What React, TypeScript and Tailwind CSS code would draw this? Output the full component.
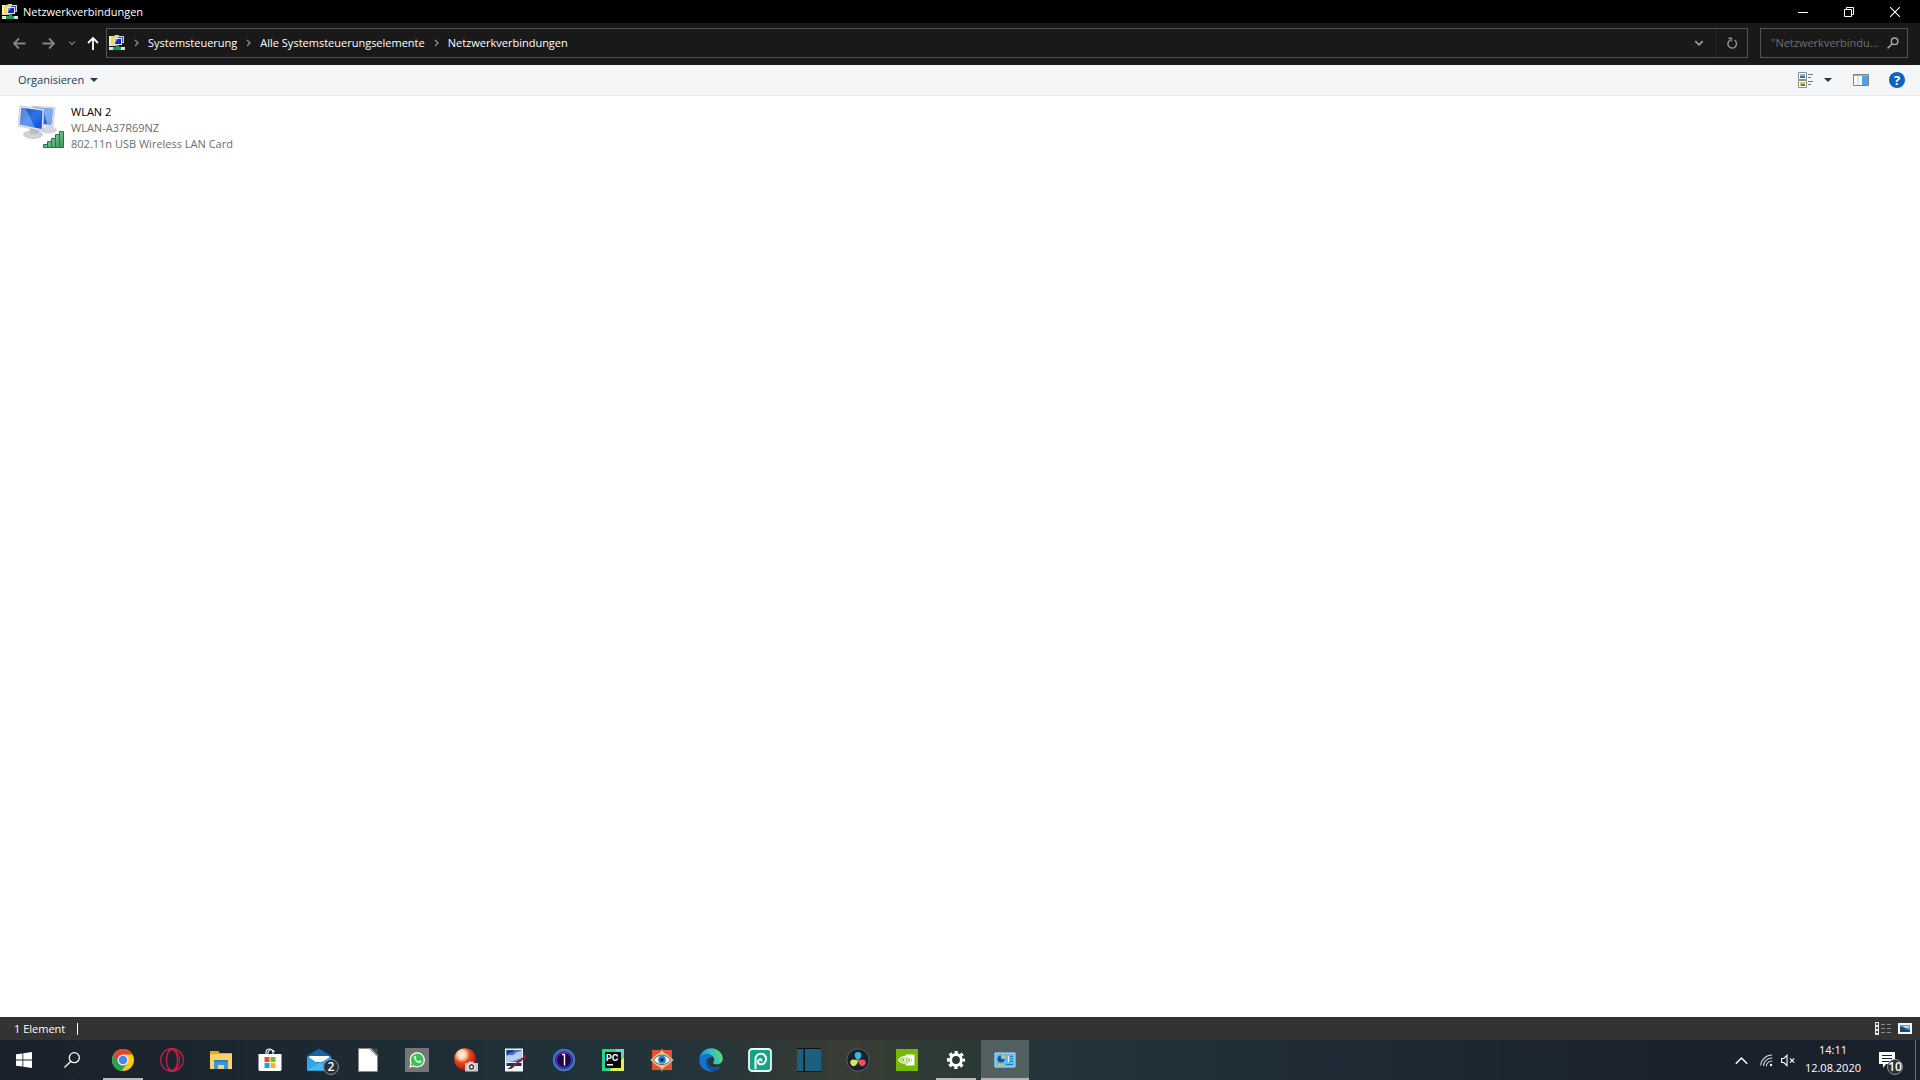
import type { ReactNode } from "react";

const CRUMBS = ["Systemsteuerung", "Alle Systemsteuerungselemente", "Netzwerkverbindungen"];

function NetworkFolderIcon() {
  return (
    <svg width="16" height="16" viewBox="0 0 16 16" className="shrink-0">
      <path d="M0 1h5l1-1h4v11H0z" fill="#f0d66e" />
      <path d="M0 1h2v10H0z" fill="#fbf0b4" />
      <path d="M8 1h7v7H8z" fill="#c9d2ea" />
      <path d="M9 2h5v5H9z" fill="#3550cc" />
      <path d="M5 3h8v7H5z" fill="#dfe5f4" />
      <path d="M6 4h6v5H6z" fill="#1526b8" />
      <path d="M6 4h3L6 8z" fill="#7f9cf2" />
      <path d="M7 10h3v2H7z" fill="#15a05c" />
      <path d="M0 12h16v3H0z" fill="#d8e8de" />
      <path d="M4 12h8v3H4z" fill="#12a45e" />
    </svg>
  );
}

function Chevron({ dir, size = 8, color = "#8a8a8a" }: { dir: "right" | "down" | "up"; size?: number; color?: string }) {
  const d = { right: "M3 1l3 3-3 3", down: "M1 2.5l3 3 3-3", up: "M.5 6L4 2.5 7.5 6" }[dir];
  return (
    <svg width={size} height={size} viewBox="0 0 8 8" fill="none" stroke={color} strokeWidth={dir === "up" ? 0.9 : 1.4} className="shrink-0">
      <path d={d} />
    </svg>
  );
}

function Arrow({ dir, color }: { dir: "left" | "right" | "up"; color: string }) {
  const d = {
    left: "M13.5 7.5H2M7 2.5l-5 5 5 5",
    right: "M.5 7.5H12M7 2.5l5 5-5 5",
    up: "M7 14V2M2 7l5-5 5 5",
  }[dir];
  return (
    <svg width="14" height="15" viewBox="0 0 14 15" fill="none" stroke={color} strokeWidth="1.8">
      <path d={d} />
    </svg>
  );
}

function Triangle() {
  return (
    <svg width="8" height="4" viewBox="0 0 8 4">
      <path d="M0 0h8L4 4z" fill="#1e395b" />
    </svg>
  );
}

function TitleBar() {
  return (
    <header className="flex h-[23px] shrink-0 items-center bg-black pl-0.5 pr-0.5 text-white">
      <NetworkFolderIcon />
      <h1 className="ml-[5px] flex-1">Netzwerkverbindungen</h1>
      <button aria-label="Minimieren" className="flex h-full w-[46px] items-center justify-center">
        <svg width="10" height="10" viewBox="0 0 10 10"><path d="M0 5h10v1H0z" fill="#fff" /></svg>
      </button>
      <button aria-label="Wiederherstellen" className="flex h-full w-[46px] items-center justify-center">
        <svg width="10" height="10" viewBox="0 0 10 10" fill="none" stroke="#fff">
          <path d="M.5 2.5h7v7h-7zM2.5 2.5v-2h7v7h-2" />
        </svg>
      </button>
      <button aria-label="Schließen" className="flex h-full w-[46px] items-center justify-center">
        <svg width="10" height="10" viewBox="0 0 10 10" stroke="#fff" strokeWidth="1.1"><path d="M0 0l10 10M10 0L0 10" /></svg>
      </button>
    </header>
  );
}

function AddressRow() {
  return (
    <div className="flex h-[42px] shrink-0 items-center bg-[#191919] px-3 pb-0.5">
      <button aria-label="Zurück"><Arrow dir="left" color="#858585" /></button>
      <button aria-label="Vorwärts" className="ml-4"><Arrow dir="right" color="#858585" /></button>
      <button aria-label="Verlauf" className="ml-3"><Chevron dir="down" color="#6f6f6f" /></button>
      <button aria-label="Nach oben" className="ml-2.5"><Arrow dir="up" color="#fff" /></button>

      <nav className="ml-1.5 flex h-[30px] flex-1 items-center border border-[#535353] pl-0.5">
        <NetworkFolderIcon />
        {CRUMBS.map((c) => (
          <div key={c} className="flex items-center">
            <span className="ml-[7px] mr-2"><Chevron dir="right" /></span>
            <a href="#" className="text-white">{c}</a>
          </div>
        ))}
        <button aria-label="Vorherige Orte" className="ml-auto mr-3"><Chevron dir="down" size={10} color="#9a9a9a" /></button>
        <button aria-label="Aktualisieren" className="flex h-full w-[31px] items-center justify-center border-l border-[#222]">
          <svg width="12" height="13" viewBox="0 0 12 13" fill="none" stroke="#8f8f8f" strokeWidth="1.5">
            <path d="M8.6 3.2A4.3 4.3 0 1 1 4 3.1" />
            <path d="M2.4 1.2h3v3.4" />
          </svg>
        </button>
      </nav>

      <label className="ml-3 flex h-[30px] w-[148px] items-center border border-[#535353] pl-2.5 pr-2">
        <input
          aria-label="Suchen"
          placeholder={'"Netzwerkverbindu...'}
          className="min-w-0 flex-1 bg-transparent placeholder:text-[#707070] focus:outline-none"
        />
        <svg width="12" height="12" viewBox="0 0 12 12" fill="none" stroke="#a2a2a2" strokeWidth="1.5">
          <circle cx="7.6" cy="4.2" r="3.3" />
          <path d="M5.2 6.8L.6 11.4" />
        </svg>
      </label>
    </div>
  );
}

function Toolbar() {
  return (
    <div className="flex h-[31px] shrink-0 items-center border-b border-[#e6e7e8] bg-[#f5f6f7] pl-[18px] pr-[15px] text-[#1e395b]">
      <button className="flex items-center gap-1.5">Organisieren <Triangle /></button>
      <button aria-label="Ansicht ändern" className="ml-auto">
        <svg width="16" height="16" viewBox="0 0 16 16">
          <path d="M.5.5h8v7h-8zM.5 8.5h8v7h-8z" fill="#fff" stroke="#8b8f94" />
          <path d="M2 2h5v4H2z" fill="#7fb8e8" />
          <path d="M2 4h5v2H2z" fill="#3c6f9c" />
          <path d="M2 10h5v4H2z" fill="#d6c96a" />
          <path d="M3 12h4v2H3z" fill="#6f7a32" />
          <path d="M10 2.500h5M10 5.500h3M10 9.500h5M10 12.500h3" stroke="#6d7782" />
        </svg>
      </button>
      <button aria-label="Weitere Optionen" className="ml-2.5"><Triangle /></button>
      <button aria-label="Vorschaufenster" className="ml-[21px]">
        <svg width="16" height="12" viewBox="0 0 16 12">
          <path d="M.5.5h15v11H.5z" fill="#fff" stroke="#7d848c" />
          <path d="M1 1h14v1H1z" fill="#a9b0b8" />
          <path d="M9 2h6v9H9z" fill="#4ea3e6" />
          <path d="M5 2v9" stroke="#c6cacf" />
        </svg>
      </button>
      <button aria-label="Hilfe" className="ml-5 flex size-4 items-center justify-center rounded-full bg-[#0b62c4] text-[13px] font-bold text-white">?</button>
    </div>
  );
}

function WlanIcon() {
  return (
    <svg width="48" height="48" viewBox="0 0 48 48" className="shrink-0">
      <defs>
        <linearGradient id="screen" x1="0" y1="0" x2="1" y2="1">
          <stop offset="0" stopColor="#1440bd" />
          <stop offset=".5" stopColor="#2f74ea" />
          <stop offset="1" stopColor="#0c49d8" />
        </linearGradient>
        <linearGradient id="bars" x1="0" y1="0" x2="1" y2="1">
          <stop offset="0" stopColor="#a3d9b0" />
          <stop offset="1" stopColor="#37985a" />
        </linearGradient>
      </defs>
      <ellipse cx="31" cy="26" rx="8" ry="3.500" fill="#d3d6da" />
      <path d="M14 2l23 1.500-2 19-19-2z" fill="#dfe2e6" stroke="#b8bcc2" strokeWidth=".6" />
      <path d="M16 3.500l19 1.300-1.800 16L17 19z" fill="url(#screen)" />
      <path d="M25 4l10 .8-1.800 16-4-.5z" fill="#b4d6fc" opacity=".6" />
      <ellipse cx="15" cy="30.500" rx="9.500" ry="4" fill="#cfd2d6" stroke="#b2b5b9" strokeWidth=".5" />
      <path d="M12 24h8l1 6h-9z" fill="#b9bcc1" />
      <path d="M2 2l24 3-1 22L0 22z" fill="#e6e8eb" stroke="#b3b7bd" strokeWidth=".6" />
      <path d="M3.500 3.800l21 2.700-.9 18.500L1.800 20.600z" fill="url(#screen)" />
      <path d="M3.500 3.800l4 .5L17 23.600 1.800 20.600z" fill="#9cc6fb" opacity=".45" />
      <path d="M25.500 40.500h4v3h-4zM29.500 37.500h4v6h-4zM33.500 34.500h4v9h-4zM37.500 30.500h4v13h-4zM41.500 27.500h4v16h-4z" fill="url(#bars)" stroke="#1f7a3e" />
    </svg>
  );
}

function Content() {
  return (
    <main className="min-h-0 flex-1 bg-white px-[18px] py-1.5">
      <button className="flex w-60 items-start gap-[5px] pt-0.5 text-left">
        <WlanIcon />
        <span className="flex flex-col whitespace-nowrap leading-4 text-[#6d6d6d]">
          <span className="text-black">WLAN 2</span>
          <span>WLAN-A37R69NZ</span>
          <span>802.11n USB Wireless LAN Card</span>
        </span>
      </button>
    </main>
  );
}

function StatusBar() {
  return (
    <div className="flex h-[23px] shrink-0 items-center bg-[#333] pl-3.5 pr-2 text-white">
      <span>1 Element</span>
      <span className="ml-3 h-3 w-px bg-white" />
      <button aria-label="Details" className="ml-auto">
        <svg width="16" height="13" viewBox="0 0 16 13">
          <path d="M0 0h4v13H0z" fill="#e8e8e8" />
          <path d="M1 1h2v2H1zM1 5h2v2H1zM1 9h2v2H1z" fill="#444" />
          <path d="M6 2.500h4M12 2.500h4M6 6.500h4M12 6.500h4M6 10.500h4M12 10.500h4" stroke="#8a8a8a" />
        </svg>
      </button>
      <button aria-label="Große Symbole" className="ml-[7px]">
        <svg width="14" height="11" viewBox="0 0 14 11">
          <path d="M0 0h14v11H0z" fill="#f4f7fa" />
          <path d="M2 2h10v7H2z" fill="#4f9fe0" />
          <path d="M2 4c3-1 6 3 10 3v2H2z" fill="#1d4a68" />
          <path d="M5 3h6v1.500H7z" fill="#d8ecfb" />
        </svg>
      </button>
    </div>
  );
}

const APPS: { name: string; icon: ReactNode; state?: "open" | "active"; badge?: number }[] = [
  {
    name: "Google Chrome",
    state: "open",
    icon: (
      <>
        <circle cx="12" cy="12" r="11" fill="#fbc916" />
        <path d="M12 12L2.500 6.500A11 11 0 0 0 10.500 22.900L16.800 14.700z" fill="#23a455" />
        <path d="M2.500 6.500A11 11 0 0 1 21.500 6.500H12L7.200 14.700z" fill="#e04434" />
        <circle cx="12" cy="12" r="5.500" fill="#f4f4f4" />
        <circle cx="12" cy="12" r="4.300" fill="#4787ee" />
      </>
    ),
  },
  {
    name: "Opera GX",
    icon: (
      <g fill="none" stroke="#d41c4a" strokeWidth="1.200">
        <circle cx="12" cy="12" r="11.300" />
        <ellipse cx="12" cy="12" rx="5.500" ry="10.800" />
        <path d="M8.500 2.500c7-3 11 3 11 9.500s-4 12.500-11 9.500" />
      </g>
    ),
  },
  {
    name: "Explorer",
    icon: (
      <>
        <path d="M1 3h8l2 2h12v16H1z" fill="#e8a52c" />
        <path d="M1 6h22v15H1z" fill="#fdd365" />
        <path d="M5 12h14v9h-4v-4H9v4H5z" fill="#3a95dc" />
        <path d="M5 12h14v2H5z" fill="#2c7fc4" />
      </>
    ),
  },
  {
    name: "Microsoft Store",
    icon: (
      <>
        <path d="M8 8V4.500a3.500 3.500 0 0 1 7 0V8M10 8V4a3.500 3.500 0 0 1 6.500 0" fill="none" stroke="#fff" strokeWidth="1.100" />
        <path d="M.5 6h23v15.500a1.500 1.500 0 0 1-1.500 1.500H2a1.500 1.500 0 0 1-1.500-1.500z" fill="#fff" />
        <path d="M6.500 9h5v5h-5z" fill="#e8501e" />
        <path d="M12.500 9h5v5h-5z" fill="#7fb61b" />
        <path d="M6.500 15h5v5h-5z" fill="#1f9fe8" />
        <path d="M12.500 15h5v5h-5z" fill="#fbb414" />
      </>
    ),
  },
  {
    name: "Mail",
    badge: 2,
    icon: (
      <>
        <path d="M0 8l12-7.500L24 8v14.500H0z" fill="#1563ac" />
        <path d="M2 8h20v6H2z" fill="#fff" />
        <path d="M0 8l12 8 12-8v14.500H0z" fill="#2ea4ea" />
        <path d="M0 22.500L13 14l11 8.500z" fill="#46b8f2" />
      </>
    ),
  },
  {
    name: "LibreOffice",
    icon: (
      <>
        <path d="M2.500.5h13l6 7v16h-19z" fill="#fff" stroke="#8c8c8c" />
        <path d="M13 .5h8.500V9z" fill="#4c4c4c" />
        <path d="M13 .5l8.500 8.500v-2L15 .5z" fill="#a7a7a7" />
      </>
    ),
  },
  {
    name: "WhatsApp",
    icon: (
      <>
        <path d="M0 0h24v24H0z" fill="#757575" />
        <path d="M5 19l1-4a7 7 0 1 1 2.700 2.900z" fill="#3cc157" stroke="#fff" strokeWidth="1.200" />
        <path d="M9.200 8.200c1-.9 1.500-.3 2 1.200.2.700-.8 1-.4 1.600.7 1.200 1.500 1.800 2.500 2.200.6.200 1-1.200 1.600-.9 1.800.8 1.700 1 1.200 1.800-2.500 3-8-2.500-6.900-5.900z" fill="#fff" />
      </>
    ),
  },
  {
    name: "Foto-Werkzeug",
    icon: (
      <>
        <defs>
          <radialGradient id="ball" cx=".35" cy=".3" r=".75">
            <stop offset="0" stopColor="#fff" />
            <stop offset=".28" stopColor="#f7c9a0" />
            <stop offset=".5" stopColor="#e8451a" />
            <stop offset="1" stopColor="#b51208" />
          </radialGradient>
        </defs>
        <circle cx="11" cy="11" r="10.800" fill="url(#ball)" />
        <path d="M11 15h3l1-1.500h4l1 1.500h4v8.500H11z" fill="#c9c9c9" />
        <circle cx="17.500" cy="19" r="3.500" fill="#4a4a4a" stroke="#fff" />
        <circle cx="17.500" cy="19" r="1.200" fill="#fff" />
      </>
    ),
  },
  {
    name: "Paint.NET",
    icon: (
      <>
        <path d="M2 .5h18v23H2z" fill="#f2f5fa" />
        <path d="M3.500 2h15v12h-15z" fill="#4474b8" />
        <path d="M3.500 9c3-4 5 0 8-3s4-2 7-3v7c-5 2-8 4-15 4z" fill="#b6cfee" />
        <path d="M3.500 2h8c-2 3-4 2-8 5z" fill="#163b84" />
        <path d="M3.500 15h15v3h-15z" fill="#1f3558" />
        <path d="M8 20L23.500 7.500" stroke="#8e2030" strokeWidth="1.800" />
        <path d="M4.500 20.500c2 0 3-3 5-2.500 1 2-2 4-5 2.500z" fill="#2c2c34" />
      </>
    ),
  },
  {
    name: "One",
    icon: (
      <>
        <circle cx="12" cy="12" r="10" fill="#0b0820" stroke="#3a78cc" strokeWidth="2.400" />
        <circle cx="12" cy="12" r="7.800" fill="#1c0a4c" stroke="#6a2cc0" strokeWidth="1.400" />
        <path d="M10 6.500h2.500v11" fill="none" stroke="#fff" strokeWidth="1.400" />
      </>
    ),
  },
  {
    name: "PyCharm",
    icon: (
      <>
        <path d="M1 1h22v10L11 23H1z" fill="#21d789" />
        <path d="M14 1h9v6l-4 6z" fill="#5fd8d0" />
        <path d="M23 9v14H8l10-9z" fill="#e6ee4e" />
        <path d="M4 4h16v16H4z" fill="#080808" />
        <text x="5" y="13" fontSize="9" fontWeight="700" fill="#fff" fontFamily="Inter, sans-serif">PC</text>
        <path d="M6 16h6v1.500H6z" fill="#fff" />
      </>
    ),
  },
  {
    name: "Bildbetrachter",
    icon: (
      <>
        <path d="M2 2h20v20H2z" fill="#e8502c" />
        <path d="M12 .5c1 4 3 4.500 6 6l5.500 5.500L18 17.500c-3 1.500-5 2-6 6-1-4-3-4.500-6-6L.5 12 6 6.500c3-1.500 5-2 6-6z" fill="#e8c497" stroke="#99673c" strokeWidth=".6" />
        <path d="M3.500 12c4-6.500 13-6.500 17 0-4 6-13 6-17 0z" fill="#fff" stroke="#64402a" strokeWidth=".9" />
        <circle cx="12" cy="11.800" r="4" fill="#2589dc" />
        <circle cx="12" cy="11.800" r="1.800" fill="#0a1a30" />
      </>
    ),
  },
  {
    name: "Microsoft Edge",
    icon: (
      <>
        <defs>
          <linearGradient id="edge" x1="0" y1=".6" x2="1" y2=".4">
            <stop offset="0" stopColor="#1687d4" />
            <stop offset=".5" stopColor="#2cbcd8" />
            <stop offset="1" stopColor="#5fdc5c" />
          </linearGradient>
        </defs>
        <path d="M.3 11C1 4.500 6 .3 12.200.3 19 .3 23.800 5.500 23.800 10.500c0 3.500-2.600 5.800-6 5.800-2.500 0-3.800-.9-3.800-1.600 0-.5 1.200-1 1.200-3C15.200 9 12.500 6.500 8.700 6.500 4 6.500 1.200 9 .3 11z" fill="url(#edge)" />
        <path d="M.3 11.500C1 8 4.500 6.300 8.500 6.500c3 .2 4.500 1.500 5 2.500-4 0-5 3-4.500 5.500.8 4 5 6.500 10.500 4.500.8-.3 1.500.2 1 .8A11.700 11.700 0 0 1 .3 11.500z" fill="#1673c8" />
        <path d="M9.500 9.800c-3 2-3.500 6-1 9.500 1.500 2.200 3.800 3.700 5.800 4.300 3-.5 5-2 6.300-4-5 2-10.500 0-11.500-4.500-.4-2 0-4 .4-5.300z" fill="#0d4f9f" />
      </>
    ),
  },
  {
    name: "PicsArt",
    icon: (
      <>
        <rect x="1" y="1" width="22" height="22" rx="3" fill="#16a487" stroke="#eef8f5" strokeWidth="1.800" />
        <path d="M7.500 20.500V11a5.300 5.300 0 1 1 5.300 5.300c-2.500 0-3.300-2.300-2.300-4 1-1.600 3-1.200 3 .2" fill="none" stroke="#fff" strokeWidth="2" strokeLinecap="round" />
      </>
    ),
  },
  {
    name: "Notizbuch",
    icon: (
      <>
        <path d="M0 1h24v22H0z" fill="#1b607e" />
        <path d="M0 0h24v1H0zM0 23h24v1H0zM6.500 1H8v22H6.500z" fill="#07141b" />
      </>
    ),
  },
  {
    name: "DaVinci Resolve",
    icon: (
      <>
        <circle cx="12" cy="12" r="11.200" fill="#17212f" stroke="#5b6772" strokeWidth=".9" />
        <path d="M12 12.500c-5-4-4-8.500 0-8.500s5 4.500 0 8.500z" fill="#38b8dc" />
        <path d="M12 12.500c-.8 6-5.200 7.200-7.200 3.800-2-3.500 1.500-6.200 7.200-3.800z" fill="#dde54f" />
        <path d="M12 12.500c5.800-2.400 9.200.5 7.200 3.800-2 3.400-6.400 2.200-7.200-3.800z" fill="#ec5351" />
      </>
    ),
  },
  {
    name: "NVIDIA",
    icon: (
      <>
        <path d="M1 1h22v22H1z" fill="#76b900" />
        <path d="M10.500 6.500h9v11h-9z" fill="#fff" />
        <path d="M3 12c3.500-5.500 10.500-5.500 14 0-3.500 5.500-10.500 5.500-14 0z" fill="#76b900" />
        <g fill="none" stroke="#fff" strokeWidth="1.100">
          <path d="M3.500 12c3-4.500 9.500-4.800 12.500-.5-3 5-9.500 5-12.500.5z" />
          <path d="M6 12c2-3 5.500-3 7.500-.5-2 3.300-5.500 3.300-7.500.5z" />
          <circle cx="10" cy="11.800" r=".7" />
        </g>
      </>
    ),
  },
  {
    name: "Einstellungen",
    state: "open",
    icon: (
      <g stroke="#fff" fill="none">
        <circle cx="12" cy="12" r="5.400" strokeWidth="3" />
        <circle cx="12" cy="12" r="7.700" strokeWidth="2.800" strokeDasharray="3.200 2.850" strokeDashoffset="1.600" />
      </g>
    ),
  },
  {
    name: "Systemsteuerung",
    state: "active",
    icon: (
      <>
        <path d="M2 5h20v14H2z" fill="#5dbdf2" stroke="#b5e1fb" />
        <path d="M8 7.500A3.500 3.500 0 1 0 11.500 11H8z" fill="#155a94" />
        <path d="M9 6.500A3.500 3.500 0 0 1 12.500 10H9z" fill="#f6b545" />
        <path d="M5 16.500h6" stroke="#f1c25a" strokeWidth="1.500" />
        <path d="M17 8.500h3M17 11h3M17 13.500h3M13 16.500h7" stroke="#1f7fc0" />
        <path d="M15.500 8v6" stroke="#e6f6ff" />
      </>
    ),
  },
];

function CountBadge({ value }: { value: number }) {
  return (
    <span className="absolute -right-2 -bottom-[3px] flex size-4 items-center justify-center rounded-full border border-[#8c9298] bg-[#2a3038] text-[12px] leading-none font-semibold text-white">
      {value}
    </span>
  );
}

function Taskbar() {
  return (
    <footer className="flex h-10 shrink-0 bg-[linear-gradient(90deg,#1a212b_0,#1c2831_300px,#203038_500px,#24343a_700px,#3a3d34_850px,#2f3c34_920px,#23343a_1050px,#1f2c36_1300px,#1a212c_1700px)]">
      <div className="flex flex-1">
        <button aria-label="Start" className="flex w-12 items-center justify-center">
          <svg width="16" height="16" viewBox="0 0 16 16" fill="#fff">
            <path d="M0 2.300l6.500-.9v6.200H0zM7.300 1.300L16 0v7.600H7.300zM0 8.400h6.500v6.200L0 13.700zM7.300 8.400H16V16l-8.700-1.300z" />
          </svg>
        </button>
        <button aria-label="Suche" className="mr-[3px] flex w-12 items-center justify-center">
          <svg width="16" height="16" viewBox="0 0 16 16" fill="none" stroke="#fff" strokeWidth="1.300">
            <circle cx="10.300" cy="5.700" r="5" />
            <path d="M6.800 9.200L.5 15.500" />
          </svg>
        </button>
        <div className="flex gap-px">
          {APPS.map((app) => (
            <button
              key={app.name}
              aria-label={app.name}
              className={`relative flex w-12 items-center justify-center ${app.state === "active" ? "bg-[#536062]" : ""}`}
            >
              <span className="relative">
                <svg width="24" height="24" viewBox="0 0 24 24">{app.icon}</svg>
                {app.badge && <CountBadge value={app.badge} />}
              </span>
              {app.state === "open" && <span className="absolute inset-x-1 bottom-0 h-0.5 bg-[#b9bbbd]" />}
              {app.state === "active" && <span className="absolute inset-x-0 bottom-0 h-0.5 bg-[#b9b3b8]" />}
            </button>
          ))}
        </div>
      </div>

      <div className="flex items-center text-white">
        <button aria-label="Ausgeblendete Symbole"><Chevron dir="up" size={13} color="#fff" /></button>
        <button aria-label="WLAN" className="ml-3">
          <svg width="13" height="13" viewBox="0 0 13 13" fill="none" stroke="#d5d8db" strokeWidth="1.100">
            <path d="M.6 11.500A11.500 11.500 0 0 1 12 1" />
            <path d="M3.500 12A8.500 8.500 0 0 1 12.300 4" />
            <path d="M6.300 12.300A5.500 5.500 0 0 1 12.300 7" />
            <circle cx="11" cy="11" r="1.200" fill="#fff" stroke="none" />
          </svg>
        </button>
        <button aria-label="Ton" className="ml-2">
          <svg width="14" height="13" viewBox="0 0 14 13" fill="none" stroke="#fff" strokeWidth="1.100">
            <path d="M.6 4.500h2.200L6 1.300v10.400L2.800 8.500H.6z" />
            <path d="M9 4.300l4.200 4.400M13.200 4.300L9 8.700" />
          </svg>
        </button>
        <button className="ml-2.5 mr-1.5 flex flex-col items-center pb-0.5 leading-[18px]">
          <time>14:11</time>
          <time>12.08.2020</time>
        </button>
        <button aria-label="Info-Center" className="flex h-full w-12 items-center pl-3">
          <span className="relative">
            <svg width="16" height="24" viewBox="0 0 16 24">
              <path d="M0 4h16v12H7l-3 4v-4H0z" fill="#fff" />
              <path d="M3 7.500h10M3 10.500h10M3 13.500h7" stroke="#1a202b" />
            </svg>
            <CountBadge value={10} />
          </span>
        </button>
        <span className="mr-1 h-full w-px bg-[#6b7078]" />
      </div>
    </footer>
  );
}

export default function App() {
  return (
    <div className="flex h-screen flex-col overflow-hidden font-['Open_Sans','Noto_Sans',sans-serif] text-[11px] leading-4">
      <TitleBar />
      <AddressRow />
      <Toolbar />
      <Content />
      <StatusBar />
      <Taskbar />
    </div>
  );
}
